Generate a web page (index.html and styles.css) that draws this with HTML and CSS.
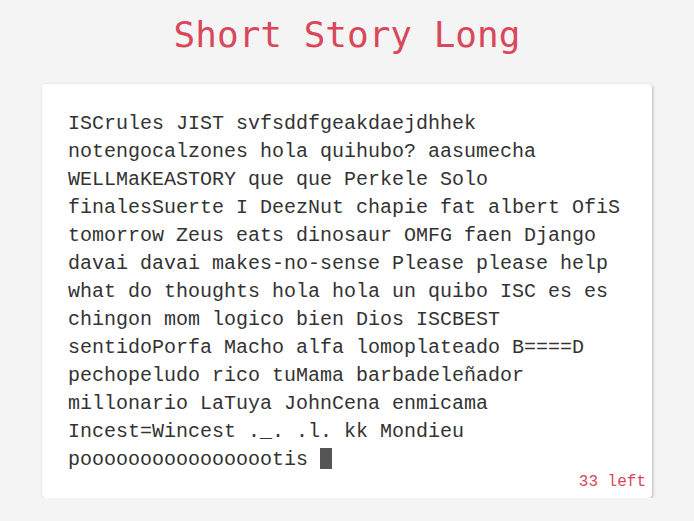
FILE: index.html
```html
<!DOCTYPE html>
<html lang="es">
<head>
<meta charset="utf-8">
<title>Short Story Long</title>
<link rel="stylesheet" href="styles.css">
</head>
<body>
<h1 class="title">Short Story Long</h1>
<main class="card">
  <p class="story">ISCrules JIST svfsddfgeakdaejdhhek notengocalzones hola quihubo? aasumecha WELLMaKEASTORY que que Perkele Solo finalesSuerte I DeezNut chapie fat albert OfiS tomorrow Zeus eats dinosaur OMFG faen Django davai davai makes-no-sense Please please help what do thoughts hola hola un quibo ISC es es chingon mom logico bien Dios ISCBEST sentidoPorfa Macho alfa lomoplateado B====D pechopeludo rico tuMama barbadeleñador millonario LaTuya JohnCena enmicama Incest=Wincest ._. .l. kk Mondieu pooooooooooooooootis <span class="cursor"></span></p>
  <div class="counter">33 left</div>
</main>
</body>
</html>
```
FILE: styles.css
```css
html, body {
  margin: 0;
  padding: 0;
  background: #f4f4f4;
}
body {
  padding-top: 14px;
}
.title {
  margin: 0;
  font-family: "DejaVu Sans Mono", monospace;
  font-weight: normal;
  font-size: 36px;
  line-height: 42px;
  color: #d9485a;
  text-align: center;
}
.card {
  box-sizing: border-box;
  width: 610px;
  margin: 28px auto 0;
  background: #fff;
  border-radius: 4px;
  box-shadow: 1px 1px 3px rgba(0, 0, 0, 0.25);
  padding: 26px 0 8px 0;
  display: flex;
  flex-direction: column;
}
.story {
  margin: 0;
  padding: 0 26px;
  font-family: "Liberation Mono", monospace;
  font-size: 20px;
  line-height: 28px;
  color: #333;
}
.cursor {
  display: inline-block;
  width: 12px;
  height: 21px;
  background: #555;
  vertical-align: -4px;
}
.counter {
  align-self: flex-end;
  padding-right: 6px;
  font-family: "Liberation Mono", monospace;
  font-size: 16px;
  line-height: 16px;
  color: #d9485a;
}
```
